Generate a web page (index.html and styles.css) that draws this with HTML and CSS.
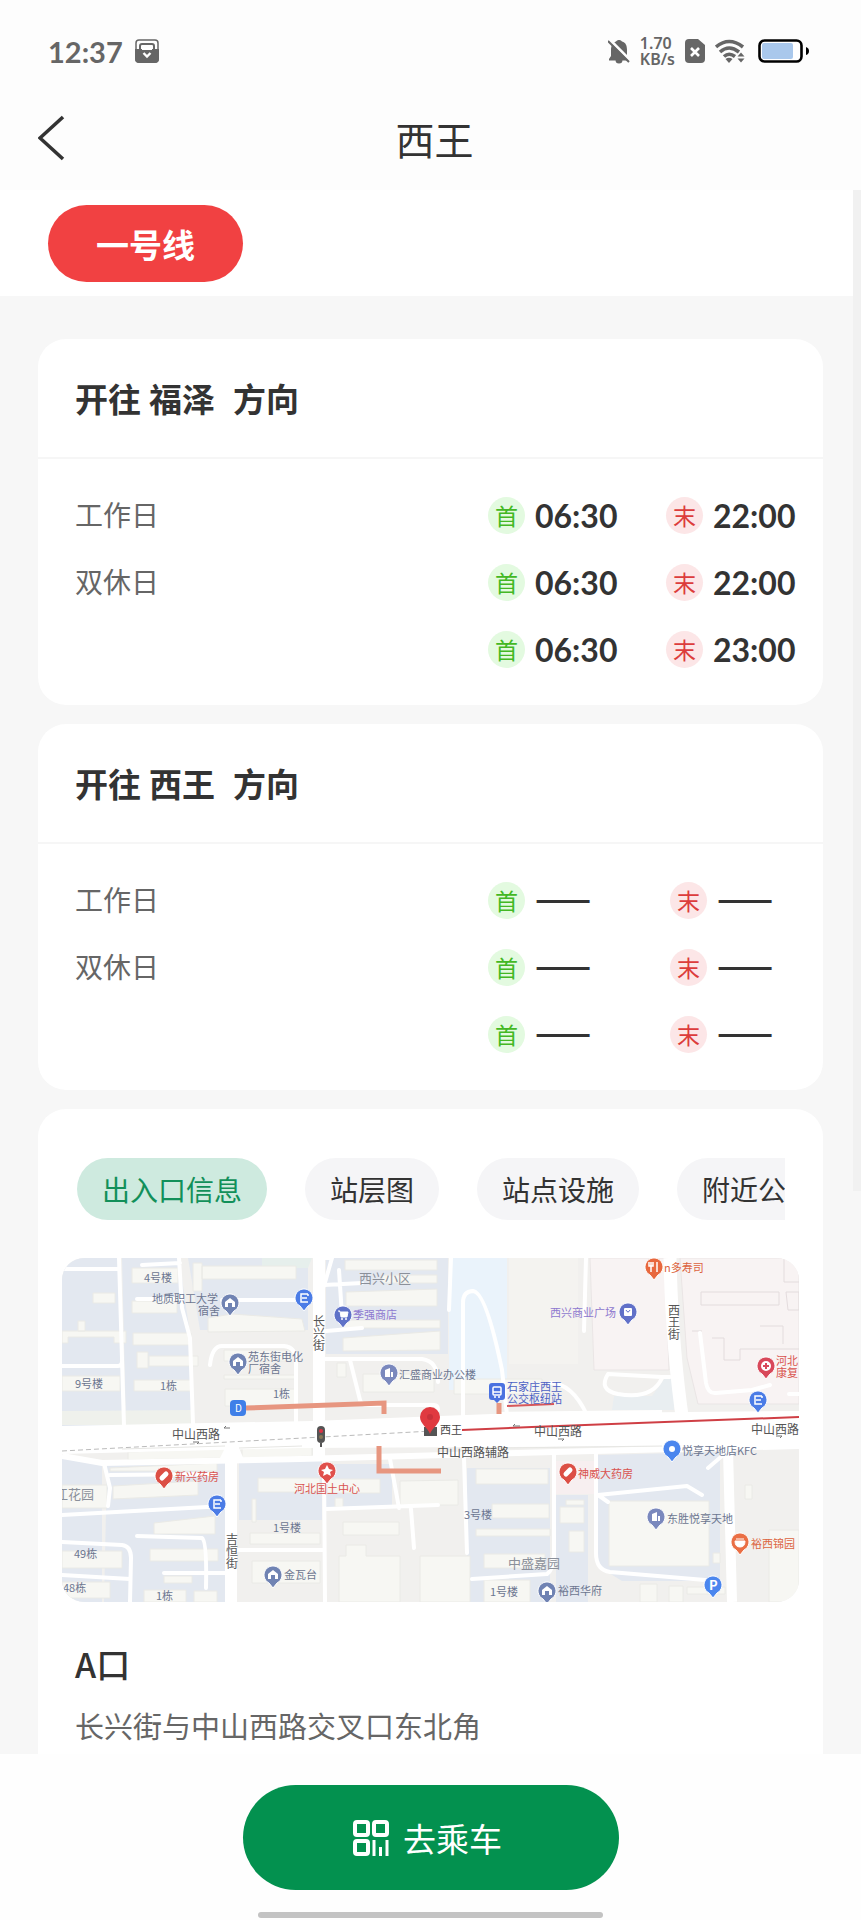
FILE: index.html
```html
<!DOCTYPE html>
<html lang="zh-CN">
<head>
    <meta charset="utf-8">
    <meta name="viewport" content="width=device-width, initial-scale=1">
    <title>西王</title>
    <link rel="stylesheet" href="styles.css">
</head>
<body>
<div class="app">
    <div class="status-bar">
        <span class="clock">12:37</span>
        <svg class="icon-lock" width="24" height="24" viewBox="0 0 24 24">
            <rect x="1" y="1" width="22" height="22" rx="3" fill="none" stroke="#666" stroke-width="1.500"/>
            <path d="M0 10H24V20a4 4 0 0 1-4 4H4a4 4 0 0 1-4-4z" fill="#666"/>
            <path d="M5 10V7a2 2 0 0 1 2-2H17a2 2 0 0 1 2 2V10" fill="none" stroke="#666" stroke-width="2"/>
            <path d="M7 10H17" stroke="#fff" stroke-width="2"/>
            <path d="M8.500 14L12 17.500L15.500 14" fill="none" stroke="#fff" stroke-width="2.400"/>
        </svg>
        <div class="status-right">
            <svg width="22" height="25" viewBox="0 0 22 25">
                <path d="M11 1a3 3 0 0 1 3 1.500c4 1 5 4.500 5 8.500v6l2 3v1.500H1V20l2-3v-6C3 6.500 5 3.500 8 2.500A3 3 0 0 1 11 1zM7.500 21h7a3.500 3.500 0 0 1-7 0z" fill="#666"/>
                <path d="M1 0L24 23" stroke="#fdfdfd" stroke-width="3"/>
                <path d="M0 2L21 23" stroke="#666" stroke-width="2"/>
            </svg>
            <span class="net-speed"><span>1.70</span><span>KB/s</span></span>
            <svg width="20" height="24" viewBox="0 0 20 24">
                <path d="M4 0H13L20 6V20a4 4 0 0 1-4 4H4a4 4 0 0 1-4-4V4a4 4 0 0 1 4-4z" fill="#666"/>
                <path d="M6 9L14 17M14 9L6 17" stroke="#fff" stroke-width="2.600"/>
            </svg>
            <svg width="30" height="24" viewBox="0 0 30 24">
                <g fill="none" stroke="#666" stroke-width="3.600">
                    <path d="M1 8Q14 -3 28 8"/>
                    <path d="M5 13Q14 5 24 13"/>
                    <path d="M9 17.500Q14 13 20 17.500"/>
                </g>
                <path d="M10.500 20Q14 17.500 17.500 20L14 24z" fill="#666"/>
                <path d="M22.500 17.500L26 13.500L29.500 17.500zM22.500 19.500L26 23.500L29.500 19.500z" fill="#666"/>
            </svg>
            <svg class="icon-battery" width="52" height="24" viewBox="0 0 52 24">
                <rect x="1.500" y="1.500" width="42" height="21" rx="5" fill="#fff" stroke="#000" stroke-width="2.600"/>
                <rect x="4" y="4" width="31" height="16" rx="2" fill="#a9c8ec"/>
                <path d="M48 8q3 1 3 4t-3 4z" fill="#000"/>
            </svg>
        </div>
    </div>

    <header class="nav">
        <button class="back" type="button" aria-label="返回">
            <svg width="28" height="46" viewBox="0 0 28 46"><path d="M25 2L2 23L25 44" fill="none" stroke="#333" stroke-width="3.600"/></svg>
        </button>
        <h1>西王</h1>
    </header>

    <div class="content">
        <main class="scroll">
            <div class="lines">
                <button class="line-pill" type="button">一号线</button>
            </div>

            <div class="cards">
                <section class="card">
                    <h2 class="card-head"><span>开往</span><span>福泽</span><span class="dir">方向</span></h2>
                    <div class="card-body">
                        <table class="times">
                            <tr>
                                <th scope="row">工作日</th>
                                <td class="first"><span class="badge green">首</span><b>06:30</b></td>
                                <td class="last"><span class="badge red">末</span><b>22:00</b></td>
                            </tr>
                            <tr>
                                <th scope="row">双休日</th>
                                <td class="first"><span class="badge green">首</span><b>06:30</b></td>
                                <td class="last"><span class="badge red">末</span><b>22:00</b></td>
                            </tr>
                            <tr>
                                <th></th>
                                <td class="first"><span class="badge green">首</span><b>06:30</b></td>
                                <td class="last"><span class="badge red">末</span><b>23:00</b></td>
                            </tr>
                        </table>
                    </div>
                </section>

                <section class="card">
                    <h2 class="card-head"><span>开往</span><span>西王</span><span class="dir">方向</span></h2>
                    <div class="card-body">
                        <table class="times empty">
                            <tr>
                                <th scope="row">工作日</th>
                                <td class="first"><span class="badge green">首</span><b>——</b></td>
                                <td class="last"><span class="badge red">末</span><b>——</b></td>
                            </tr>
                            <tr>
                                <th scope="row">双休日</th>
                                <td class="first"><span class="badge green">首</span><b>——</b></td>
                                <td class="last"><span class="badge red">末</span><b>——</b></td>
                            </tr>
                            <tr>
                                <th></th>
                                <td class="first"><span class="badge green">首</span><b>——</b></td>
                                <td class="last"><span class="badge red">末</span><b>——</b></td>
                            </tr>
                        </table>
                    </div>
                </section>

                <section class="card info">
                    <div class="tabs">
                        <button class="tab active" type="button">出入口信息</button>
                        <button class="tab" type="button">站层图</button>
                        <button class="tab" type="button">站点设施</button>
                        <button class="tab" type="button">附近公交</button>
                    </div>

                    <svg class="map" viewBox="0 0 737 344" role="img" aria-label="西王站周边地图">
                        <defs>
                            <path id="pin" d="M0 13L-4 8A9 9 0 1 1 4 8z" stroke="#fff" stroke-width="1"/>
                            <path id="house" d="M-5 4V-1L0 -5L5 -1V4H2V0H-2V4z" fill="#fff"/>
                            <path id="tower" d="M-4 4V-3L1 -5V4zM2 4V-1H4V4z" fill="#fff"/>
                            <path id="bus" d="M4 -4H-3V4H4M-2 0H3M4 -4V-2" fill="none" stroke="#fff" stroke-width="1.500"/>
                            <path id="pill" d="M-2 2L2 -2" stroke="#fff" stroke-width="5" stroke-linecap="round"/>
                        </defs>

                        <rect width="737" height="344" fill="#f1f0ee"/>

                        <!-- residential blocks -->
                        <g fill="#e3e8f0">
                            <path d="M0 0H56L61 168H0z"/>
                            <path d="M60 0H117L128 76L130 167L64 168z"/>
                            <path d="M126 0H246V72H138z"/>
                            <path d="M264 0H386V96H264z"/>
                            <path d="M0 198L40 206V344H0z"/>
                            <path d="M45 206L163 203V344H42z"/>
                            <path d="M177 203H260V262H177z"/>
                            <path d="M264 206H330V250H264z"/>
                            <path d="M405 210H488V344H405z"/>
                            <path d="M494 237H526V344H494z"/>
                            <path d="M536 197L658 194V323H560L536 308z"/>
                        </g>
                        <path d="M387 0H445V132H387z" fill="#eaf3fb"/>
                        <path d="M0 153L130 152V167H0z" fill="#eff1ec"/>
                        <path d="M200 0H250L246 10H200z" fill="#e6efec"/>
                        <path d="M447 0H516V106H447z" fill="#f4f3f0"/>
                        <g fill="#f8f3f3" stroke="#eae5e5">
                            <path d="M528 0H603L607 112H532z"/>
                            <path d="M618 0H737V146H636L625 100z"/>
                        </g>
                        <path d="M603 120L612 118V152H550L552 138H590z" fill="#e9eef1"/>
                        <path d="M492 203H532V236H492z" fill="#f7eff0"/>

                        <!-- buildings -->
                        <g fill="#f7f7f3" stroke="#eaeae6">
                            <path d="M31 35H53V45H31zM0 73H64V85H52V79H6V85H0zM16 63H23V73H16zM0 118H58V133H0z"/>
                            <path d="M70 10H116V25H70zM70 43H115V55H70zM71 75H129V87H71zM75 94H86V110H75zM87 98H136V108H87zM72 122H130V133H72z"/>
                            <path d="M131 5H140V33H131zM140 8H234V21H140zM146 60L170 56L240 61L243 73L146 74zM162 92H228V103H162zM162 117H233V121H162zM163 131H234V148H163z"/>
                            <path d="M283 2H375V12H283zM320 17H375V25H320zM284 34L375 31V48H284zM281 62H378V70H281zM281 80L378 73V92L281 93zM275 105H284V119H275zM301 116H372V134H301zM392 121H480V136H392z"/>
                            <path d="M66 194L163 190V200L66 202zM180 190L250 187V198L180 201zM48 210L155 205V213H48zM51 228L136 223V237L51 241zM92 265L153 258V276H92zM88 291H156V303H88zM0 293H60V310H0zM0 324H48V340H0zM102 318H130V325H102zM82 332H124V344H82zM132 333H155V344H132z"/>
                            <path d="M0 227H45V250H0zM196 220H258V234H196zM190 241H194V264H190zM188 275H258V286H188zM190 303H258V325H190z"/>
                            <path d="M265 221H318V235H265zM273 240H281V249H273zM338 223L396 222V247H338zM281 264H337V277H281zM284 287H304V298H338V344H277V298H284zM358 298H408V344H358z"/>
                            <path d="M414 211H486V226H414zM430 246H487V260H430zM414 271H488V278H414zM422 296H483V310H422zM422 322H468V344H422z"/>
                            <path d="M504 242H522V247H504zM498 249H522V265H498zM507 273H522V294H507zM547 243H647V308H547zM651 295H658V305H651zM578 326H595V344H578zM607 328H621V344H607zM625 329H663V336H625z"/>
                            <path d="M683 227H690V241H683zM707 272H737V344H707z"/>
                        </g>
                        <g fill="none" stroke="#e3dcdd">
                            <path d="M639 34H717V47H639zM650 80H662V102H678V91H737M698 68H721V86M724 34H737V52H726zM630 73H640M722 0V24H737"/>
                        </g>

                        <!-- side roads -->
                        <g fill="none" stroke="#fff" stroke-width="4" stroke-linejoin="round" stroke-linecap="round">
                            <path d="M57 0L62 168M0 11H57M0 108H56Q60 108 60 103M117 0L120 50L128 80L131 166M80 7L118 5M75 41H120M160 42H245"/>
                            <path d="M148 107Q150 88 160 88H222Q234 89 234 104V166"/>
                            <path d="M262 27L300 25M277 12L280 58M264 73L300 70M262 101L360 101Q376 103 376 124M288 102L298 142Q299 147 306 147H372Q376 147 376 152"/>
                            <path d="M389 0L387 52M401 157V45Q401 33 411 33Q424 34 440 112L445 157"/>
                            <path d="M262 0H270L262 28"/>
                            <path d="M524 0L522 73M488 125Q510 125 525 157"/>
                            <path d="M608 119L600 119L546 116Q536 132 556 136Q590 142 600 120"/>
                            <path d="M638 75L644 125Q646 136 654 135L690 132L708 127M727 136H737"/>
                            <path d="M42 205L48 230L46 248M0 257L163 248M48 217L152 216M75 278L140 280Q145 283 144 330M0 284L60 287Q69 288 69 300L68 344M0 317L68 321M102 315H163"/>
                            <path d="M262 205L263 344M264 251L376 247M328 201L337 250M349 251L352 290M175 292H262M402 200L405 295M410 321L485 316Q491 312 491 300M492 197V300"/>
                            <path d="M534 196V295Q534 312 548 314L655 323M536 237L625 228L640 237M536 237L546 244M646 210L660 198"/>
                        </g>

                        <!-- streets -->
                        <g fill="none" stroke="#fff">
                            <path d="M257 0V200" stroke-width="12"/>
                            <path d="M169 344V190" stroke-width="12"/>
                            <path d="M608 0Q610 90 621 165" stroke-width="13"/>
                            <path d="M666 192L670 344" stroke-width="10"/>
                            <path d="M0 198L40 205L238 201L492 194L737 188" stroke-width="6"/>
                            <path d="M435 156L600 154" stroke-width="4"/>
                        </g>
                        <path d="M0 168L250 163L430 156L737 153V187L430 189L238 190L0 196z" fill="#fff"/>
                        <path d="M163 190H177L183 204H156z" fill="#fff"/>
                        <path d="M0 193L260 179L370 173" fill="none" stroke="#bbb" stroke-dasharray="5 3"/>
                        <path d="M60 191L163 188M177 190L240 188M440 190L600 188" fill="none" stroke="#e6e6e3"/>

                        <!-- underground passages and metro line -->
                        <g fill="none" stroke="#e79680" stroke-width="5">
                            <path d="M184 150L322 145V156"/>
                            <path d="M317 188V213H379"/>
                            <path d="M437 156V145"/>
                        </g>
                        <path d="M445 148L492 146" stroke="#d6575a" stroke-width="2"/>
                        <path d="M400 172L470 169L737 159" fill="none" stroke="#cf3f45" stroke-width="2"/>
                        <path d="M162 170H168M162 170L164 168M131 184H137L135 186M451 168H458M451 168L453 166M496 181H502L500 183M714 178H720L718 180" fill="none" stroke="#777"/>

                        <g class="label slate">
                            <text x="82" y="24">4号楼</text>
                            <text x="90" y="45">地质职工大学</text>
                            <text x="136" y="57">宿舍</text>
                            <text x="186" y="103">苑东街电化</text>
                            <text x="186" y="115">厂宿舍</text>
                            <text x="13" y="130">9号楼</text>
                            <text x="98" y="132">1栋</text>
                            <text x="211" y="140">1栋</text>
                            <text x="211" y="274">1号楼</text>
                            <text x="12" y="300">49栋</text>
                            <text x="1" y="334">48栋</text>
                            <text x="94" y="342">1栋</text>
                            <text x="222" y="321">金瓦台</text>
                            <text x="337" y="121">汇盛商业办公楼</text>
                            <text x="402" y="261">3号楼</text>
                            <text x="428" y="338">1号楼</text>
                            <text x="496" y="337">裕西华府</text>
                            <text x="620" y="197">悦享天地店KFC</text>
                            <text x="605" y="265">东胜悦享天地</text>
                        </g>
                        <g class="label area">
                            <text x="-7" y="241">江花园</text>
                            <text x="297" y="25">西兴小区</text>
                            <text x="446" y="310">中盛嘉园</text>
                        </g>
                        <g class="label road">
                            <text x="110" y="181">中山西路</text>
                            <text x="472" y="178">中山西路</text>
                            <text x="689" y="176">中山西路</text>
                            <text x="375" y="199">中山西路辅路</text>
                            <text><tspan x="251" y="68">长</tspan><tspan x="251" y="80">兴</tspan><tspan x="251" y="92">街</tspan></text>
                            <text><tspan x="164" y="286">吉</tspan><tspan x="164" y="298">恒</tspan><tspan x="164" y="310">街</tspan></text>
                            <text><tspan x="606" y="57">西</tspan><tspan x="606" y="69">王</tspan><tspan x="606" y="81">街</tspan></text>
                        </g>
                        <text class="label station" x="378" y="176">西王</text>
                        <g class="label purple">
                            <text x="291" y="61">季强商店</text>
                            <text x="488" y="59">西兴商业广场</text>
                        </g>
                        <g class="label transit">
                            <text x="445" y="133">石家庄西王</text>
                            <text x="445" y="145">公交枢纽站</text>
                        </g>
                        <g class="label medical">
                            <text x="113" y="223">新兴药房</text>
                            <text x="232" y="235">河北国土中心</text>
                            <text x="516" y="220">神威大药房</text>
                            <text x="714" y="107">河北</text>
                            <text x="714" y="119">康复</text>
                        </g>
                        <g class="label food">
                            <text x="602" y="14">n多寿司</text>
                            <text x="689" y="290">裕西锦园</text>
                        </g>

                        <!-- pins -->
                        <g transform="translate(168 45)"><use href="#pin" fill="#7083b3"/><use href="#house"/></g>
                        <g transform="translate(176 104)"><use href="#pin" fill="#7083b3"/><use href="#house"/></g>
                        <g transform="translate(211 317)"><use href="#pin" fill="#7083b3"/><use href="#house"/></g>
                        <g transform="translate(485 333)"><use href="#pin" fill="#7083b3"/><use href="#house"/></g>
                        <g transform="translate(327 115)"><use href="#pin" fill="#7a88bd"/><use href="#tower"/></g>
                        <g transform="translate(594 259)"><use href="#pin" fill="#7a88bd"/><use href="#tower"/></g>
                        <g transform="translate(242 40)"><use href="#pin" fill="#4b7ce6"/><use href="#bus"/></g>
                        <g transform="translate(155 246)"><use href="#pin" fill="#4b7ce6"/><use href="#bus"/></g>
                        <g transform="translate(696 142)"><use href="#pin" fill="#4b7ce6"/><use href="#bus"/></g>
                        <g transform="translate(281 57)"><use href="#pin" fill="#5f72c8"/><path d="M-5 -4H-3L-2 2H4L5 -3H-2" fill="#fff" stroke="#fff"/><circle cx="-1" cy="4" r="1" fill="#fff"/><circle cx="3" cy="4" r="1" fill="#fff"/></g>
                        <g transform="translate(566 54)"><use href="#pin" fill="#6170c8"/><rect x="-4" y="-4" width="8" height="8" rx="1" fill="#fff"/><path d="M-2 -2Q0 2 2 -2" fill="none" stroke="#6170c8"/></g>
                        <g transform="translate(610 191)"><use href="#pin" fill="#4b86ee"/><circle r="3" fill="#fff"/></g>
                        <g transform="translate(651 327)"><use href="#pin" fill="#4b86ee"/><text class="mark" x="-4" y="5">P</text></g>
                        <g transform="translate(102 218)"><use href="#pin" fill="#dc4f45"/><use href="#pill"/></g>
                        <g transform="translate(506 214)"><use href="#pin" fill="#dc4f45"/><use href="#pill"/></g>
                        <g transform="translate(265 213)"><use href="#pin" fill="#e0504c"/><path d="M0 -6L2 -2L6 -1L3 1L4 5L0 3L-4 5L-3 1L-6 -1L-2 -2z" fill="#fff"/></g>
                        <g transform="translate(704 108)"><use href="#pin" fill="#d8485a"/><circle r="5" fill="#fff"/><path d="M-3 0H3M0 -3V3" stroke="#d8485a" stroke-width="2"/></g>
                        <g transform="translate(592 9)"><use href="#pin" fill="#e8683e"/><path d="M-3 -5V5M3 -5V5M-5 -5V-1H-1V-5" fill="none" stroke="#fff" stroke-width="1.500"/></g>
                        <g transform="translate(678 284)"><use href="#pin" fill="#ea6f45"/><path d="M-5 -1H5Q5 5 0 5T-5 -1zM-4 -3H4" fill="#fff" stroke="#fff"/></g>

                        <rect x="168" y="142" width="16" height="16" rx="4" fill="#3f7fe8"/>
                        <text class="exit" x="173" y="154">D</text>
                        <g transform="translate(435 134)">
                            <path d="M-5 -9H5Q8 -9 8 -6V5Q8 8 5 8H3L0 11L-3 8H-5Q-8 8 -8 5V-6Q-8 -9 -5 -9z" fill="#4b72e0"/>
                            <rect x="-4" y="-5" width="8" height="8" rx="1" fill="none" stroke="#fff" stroke-width="1.500"/>
                            <path d="M-4 0H4M-3 5H-1M1 5H3" stroke="#fff" stroke-width="1.500"/>
                        </g>
                        <g transform="translate(259 177)">
                            <rect x="-4" y="-9" width="8" height="17" rx="4" fill="#555"/>
                            <circle cy="-4" r="2" fill="#d34"/><circle cy="2" r="2" fill="#875"/>
                            <path d="M0 8V12" stroke="#555" stroke-width="2"/>
                        </g>
                        <path d="M362 169H375V178H362z" fill="#555"/>
                        <path d="M368 176C366 170 358 166 358 159A10 10 0 0 1 378 159C378 166 370 170 368 176z" fill="#e03a40"/>
                        <circle cx="368" cy="159" r="3" fill="#c8323a"/>
                    </svg>

                    <h3>A口</h3>
                    <p>长兴街与中山西路交叉口东北角</p>
                </section>
            </div>
        </main>
        <div class="scroll-thumb"></div>
    </div>

    <footer class="bottom-bar">
        <button class="ride" type="button">
            <svg width="36" height="36" viewBox="0 0 36 36" fill="none" stroke="#fff" stroke-width="4">
                <rect x="2" y="2" width="13" height="13" rx="2"/>
                <rect x="21" y="2" width="13" height="13" rx="2"/>
                <rect x="2" y="21" width="13" height="13" rx="2"/>
                <path d="M21 20V36M27.500 27V36M34 20V36" stroke-width="3"/>
            </svg>
            去乘车
        </button>
        <div class="home-indicator"></div>
    </footer>
</div>
</body>
</html>
```

FILE: styles.css
```css
* { box-sizing: border-box; }
body { margin: 0; font-family: "Noto Sans CJK SC", sans-serif; color: #333; background: #fdfdfd; }
button { border: 0; padding: 0; font-family: inherit; color: inherit; cursor: pointer; }
h1, h2, h3, p { margin: 0; }
svg { display: block; }

.app { display: flex; flex-direction: column; height: 100vh; }

/* status bar */
.status-bar { display: flex; align-items: center; height: 90px; padding: 12px 51px 0 48px; color: #666; }
.clock { font: 700 29px Lato, sans-serif; }
.icon-lock { margin-left: 12px; }
.status-right { display: flex; align-items: center; gap: 10px; margin-left: auto; }
.net-speed { display: flex; flex-direction: column; font: 600 16px/16px "Noto Sans", sans-serif; }
.icon-battery { margin-left: 3px; }

/* title */
.nav { display: grid; grid-template-columns: 1fr auto 1fr; align-items: center; height: 100px; padding: 0 30px 4px 38px; }
.nav h1 { font-size: 39px; font-weight: 400; line-height: 56px; }
.back { background: none; justify-self: start; }

.content { flex: 1; min-height: 0; position: relative; background: #f7f7f7; }
.scroll { height: 100%; overflow-y: auto; scrollbar-width: none; }
.scroll-thumb { position: absolute; top: 0; right: 0; width: 8px; height: 64%; background: #f1f1f1; }

.lines { padding: 15px 48px 14px; background: #fff; }
.line-pill { display: block; height: 77px; padding: 0 48px; border-radius: 39px; background: #f14142; color: #fff; font-size: 33px; font-weight: 700; }

.cards { display: flex; flex-direction: column; gap: 19px; padding: 43px 38px; }
.card { background: #fff; border-radius: 28px; }
.card-head { display: flex; gap: 8px; padding: 35px 37px; border-bottom: 2px solid #f6f6f6; font-size: 33px; line-height: 48px; font-weight: 700; }
.dir { margin-left: 10px; }
.card-body { padding: 23px 0 22px 37px; }

/* first / last train */
.times { width: 100%; border-collapse: collapse; }
.times tr { height: 67px; }
.times th, .times td { padding: 0; vertical-align: middle; }
.times th { padding-bottom: 3px; text-align: left; font-size: 28px; line-height: 40px; font-weight: 400; color: #666; }
.first { width: 178px; }
.last { width: 157px; }
.badge { display: inline-block; width: 37px; height: 37px; margin-right: 10px; border-radius: 50%; font-size: 23px; line-height: 36px; text-align: center; vertical-align: middle; }
.green { background: #e3fae0; color: #43b824; }
.red { background: #fce6e7; color: #dc3c3c; }
.times b { font: 700 32px/40px Lato, sans-serif; vertical-align: middle; }
.empty .first { width: 182px; }
.empty .last { width: 153px; }
.times.empty b { display: inline-block; padding-bottom: 8px; font: 700 33px/30px "Noto Sans CJK SC", sans-serif; }

/* exits */
.info { padding: 49px 24px 60px; }
.tabs { display: flex; gap: 38px; margin: 0 14px 38px 15px; overflow: hidden; }
.tab { flex: none; height: 62px; padding: 0 25px; border-radius: 31px; background: #f5f5f7; font-size: 28px; }
.active { background: #ceeadf; color: #12905a; }
.map { width: 100%; height: auto; border-radius: 22px; }
.info h3 { margin: 38px 13px 0; font-size: 34px; line-height: 48px; font-weight: 500; }
.info p { margin: 16px 13px 0; font-size: 29px; line-height: 42px; color: #666; }

.label { font-size: 11px; }
.slate { fill: #6c7690; }
.area { font-size: 13px; fill: #8b909a; }
.road { font-size: 12px; fill: #555; }
.station { fill: #444; }
.purple { fill: #8d78cf; }
.transit { fill: #4d62c4; }
.medical { fill: #d9534f; }
.food { fill: #dc6440; }
.mark { font-size: 13px; font-weight: 700; fill: #fff; }
.exit { font-size: 10px; fill: #fff; }

/* bottom action */
.bottom-bar { display: flex; flex-direction: column; align-items: center; gap: 22px; padding: 31px 0 2px; background: #fefefe; }
.ride { display: flex; align-items: center; justify-content: center; gap: 14px; width: 376px; height: 105px; padding-right: 6px; border-radius: 53px; background: #03914f; color: #fff; font-size: 33px; }
.home-indicator { width: 40%; height: 6px; border-radius: 3px; background: #c3c3c3; }
```
